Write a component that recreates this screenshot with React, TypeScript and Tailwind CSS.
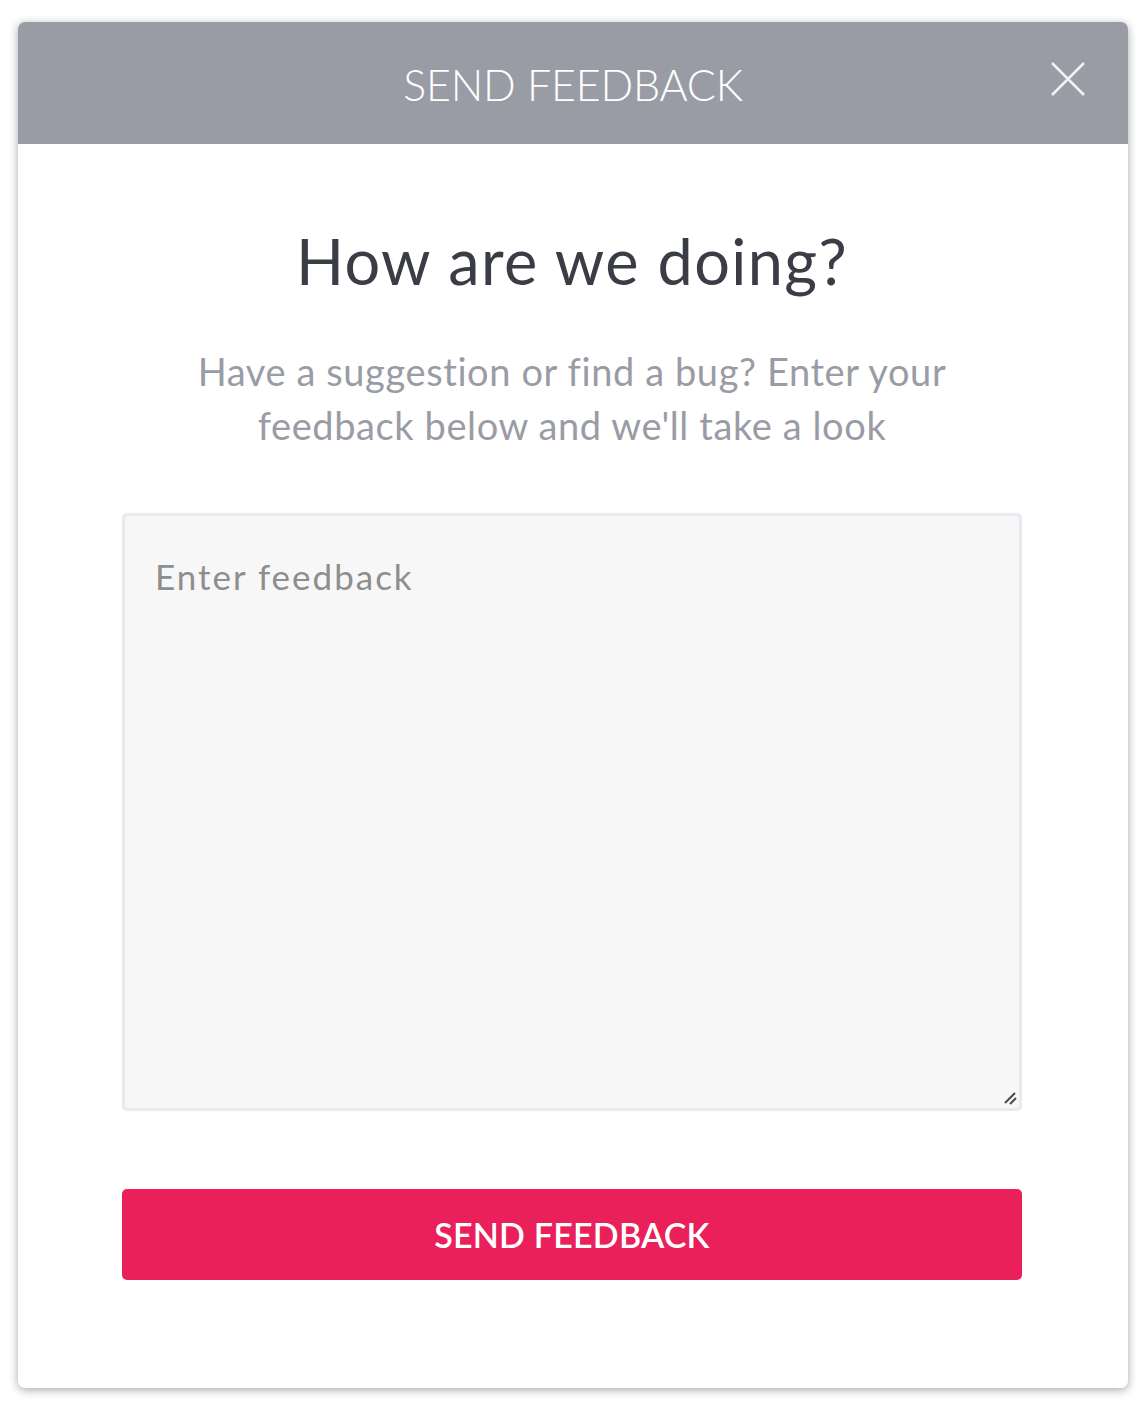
import React from "react";

export default function App() {
  return (
    <div className="min-h-[1404px] w-full bg-white pt-[22px] pl-[18px]" style={{ fontFamily: "Lato, 'Open Sans', sans-serif" }}>
      <div className="w-[1110px] h-[1366px] rounded-[7px] bg-white shadow-[0_2px_10px_rgba(0,0,0,0.35)] overflow-hidden flex flex-col">
        <div className="relative h-[122px] bg-[#9a9ca5] flex items-center justify-center">
          <span className="mt-[4px] text-[43px] font-light text-white tracking-[-0.2px]">SEND FEEDBACK</span>
          <svg className="absolute right-[43px] top-[40px]" width="34" height="34" viewBox="0 0 34 34" fill="none">
            <path d="M1 1L33 33M33 1L1 33" stroke="#f2f2f4" strokeWidth="2.5" />
          </svg>
        </div>
        <div className="flex flex-col items-stretch pl-[104px] pr-[106px]">
          <h1 className="mt-[79px] text-center text-[63px] leading-[76px] text-[#3a3c46] font-normal tracking-[1.4px]">How are we doing?</h1>
          <p className="mt-[45px] self-center text-[38px] leading-[54px] text-[#9a9ca5] text-center w-[800px] tracking-[0.6px]">
            Have a suggestion or find a bug? Enter your feedback below and we'll take a look
          </p>
          <div className="relative mt-[61px]">
            <textarea
              placeholder="Enter feedback"
              className="block w-full h-[598px] resize-none rounded-[5px] border-[3px] border-[#e9e9ef] bg-[#f7f7f7] pl-[30px] pr-[31px] py-[38px] text-[35px] leading-[44px] tracking-[2px] placeholder:text-[#8e8e8e] outline-none"
            />
            <svg className="absolute right-[5px] bottom-[6px]" width="14" height="14" viewBox="0 0 14 14" fill="none">
              <path d="M2 12L12 2M7 13L13 7" stroke="#4a4a4a" strokeWidth="2" />
            </svg>
          </div>
          <button className="mt-[78px] w-full h-[91px] rounded-[5px] bg-[#ea205a] text-white text-[34px] font-semibold tracking-[0.2px]">
            SEND FEEDBACK
          </button>
        </div>
      </div>
    </div>
  );
}
